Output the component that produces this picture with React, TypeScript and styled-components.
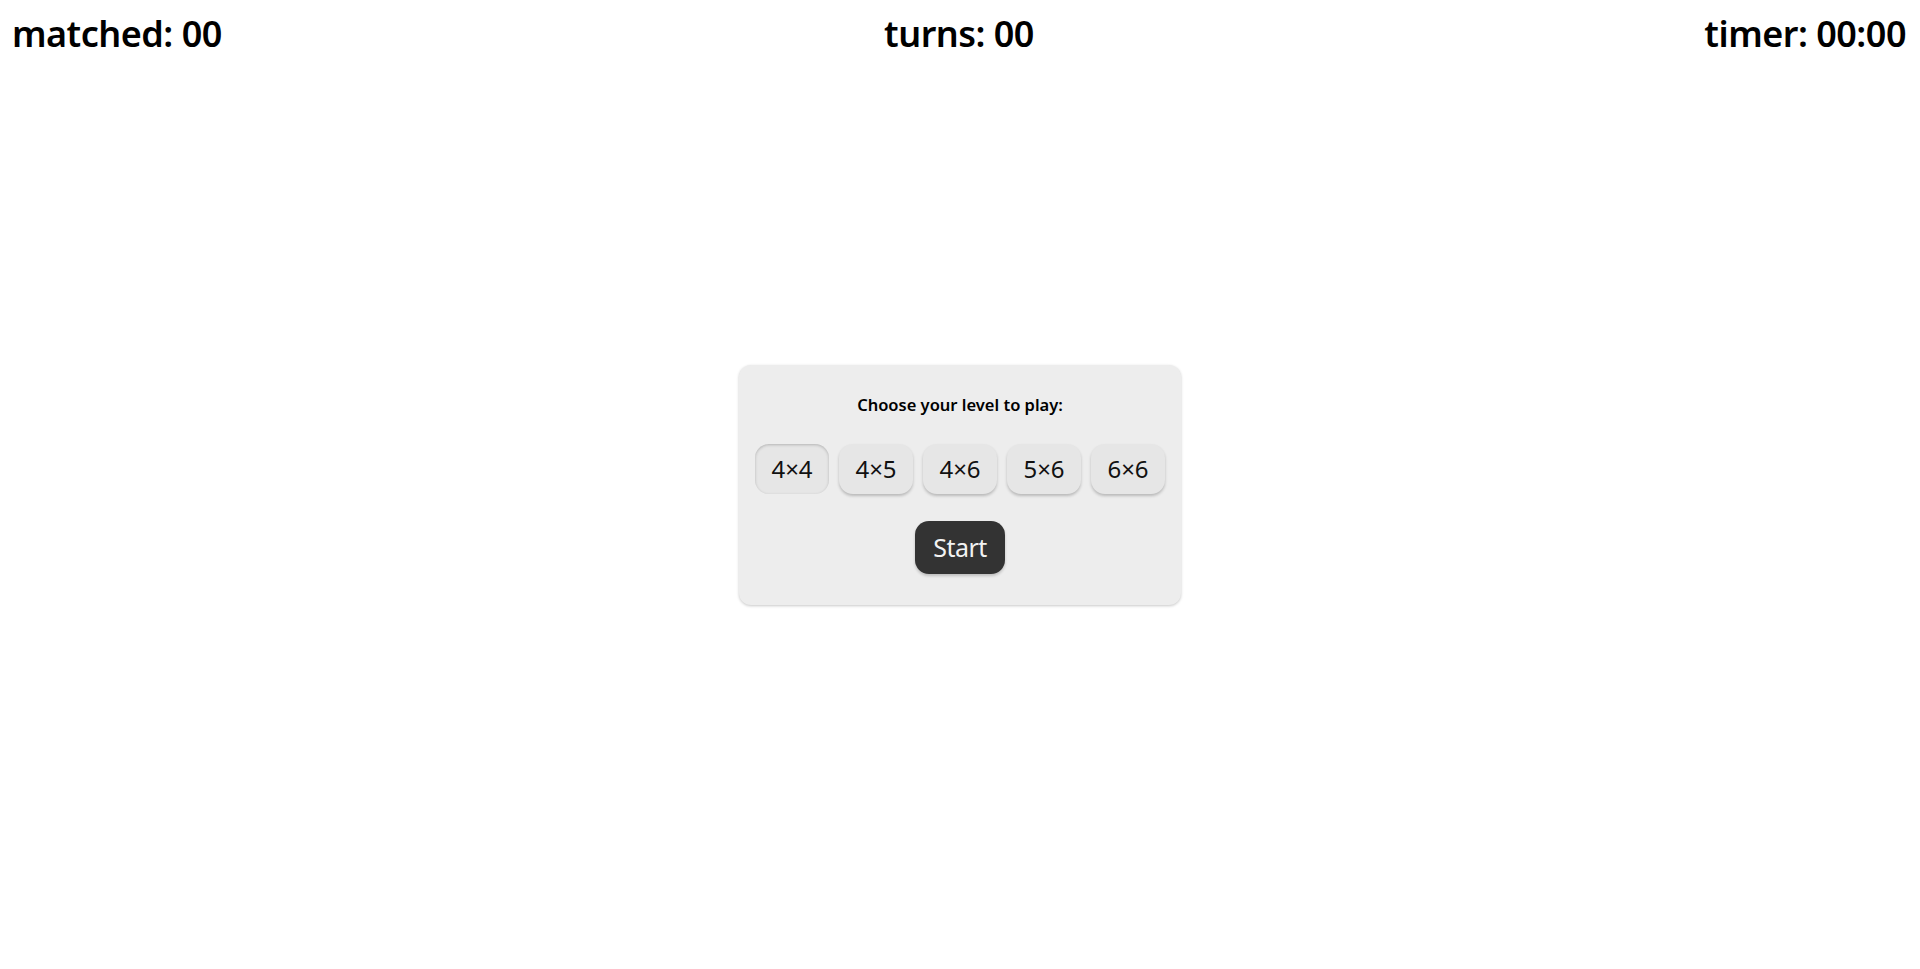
import React, { useState } from "react";
import styled, { createGlobalStyle } from "styled-components";

const Global = createGlobalStyle`
  html, body { margin: 0; padding: 0; background: #fff; }
  body { font-family: "Noto Sans", "Open Sans", sans-serif; color: #000; }
  * { box-sizing: border-box; }
`;

const Page = styled.div`
  height: 969px;
  display: flex;
  flex-direction: column;
  position: relative;
`;

const Header = styled.header`
  display: grid;
  grid-template-columns: 1fr auto 1fr;
  align-items: center;
  padding: 8px 14px 0 12px;
  height: 60px;
`;

const Stat = styled.div<{ $align: "left" | "center" | "right" }>`
  font-size: 36px;
  font-weight: 600;
  letter-spacing: -0.5px;
  text-align: ${(p) => p.$align};
  line-height: 1;
`;

const Main = styled.main`
  position: absolute;
  inset: 0;
  display: flex;
  align-items: center;
  justify-content: center;
  pointer-events: none;
`;

const Card = styled.div`
  pointer-events: auto;
  width: 442px;
  height: 240px;
  background: #ededed;
  border-radius: 12px;
  box-shadow: 0 1px 3px rgba(0, 0, 0, 0.22);
  display: flex;
  flex-direction: column;
  align-items: center;
  padding: 27px 16px 0;
`;

const Title = styled.div`
  font-size: 16.5px;
  font-weight: 600;
  letter-spacing: 0;
  line-height: 26px;
`;

const Levels = styled.div`
  display: flex;
  gap: 10px;
  margin-top: 26px;
`;

const Level = styled.button<{ $active: boolean }>`
  width: 74px;
  height: 50px;
  border: none;
  border-radius: 14px;
  background: #e6e6e6;
  font-family: inherit;
  font-size: 24px;
  color: #111;
  cursor: pointer;
  box-shadow: ${(p) =>
    p.$active
      ? "inset 0 1px 3px rgba(0,0,0,0.22)"
      : "0 2px 3px rgba(0,0,0,0.22)"};
`;

const Start = styled.button`
  margin-top: 27px;
  width: 90px;
  height: 53px;
  border: none;
  border-radius: 14px;
  background: #333;
  color: #f2f2f2;
  font-family: inherit;
  font-size: 25px;
  letter-spacing: -0.5px;
  cursor: pointer;
  box-shadow: 0 2px 3px rgba(0, 0, 0, 0.2);
`;

const levels = ["4×4", "4×5", "4×6", "5×6", "6×6"];

export default function App() {
  const [sel, setSel] = useState(0);
  return (
    <Page>
      <Global />
      <Header>
        <Stat $align="left">matched: 00</Stat>
        <Stat $align="center">turns: 00</Stat>
        <Stat $align="right">timer: 00:00</Stat>
      </Header>
      <Main>
        <Card>
          <Title>Choose your level to play:</Title>
          <Levels>
            {levels.map((l, i) => (
              <Level key={l} $active={i === sel} onClick={() => setSel(i)}>
                {l}
              </Level>
            ))}
          </Levels>
          <Start>Start</Start>
        </Card>
      </Main>
    </Page>
  );
}
